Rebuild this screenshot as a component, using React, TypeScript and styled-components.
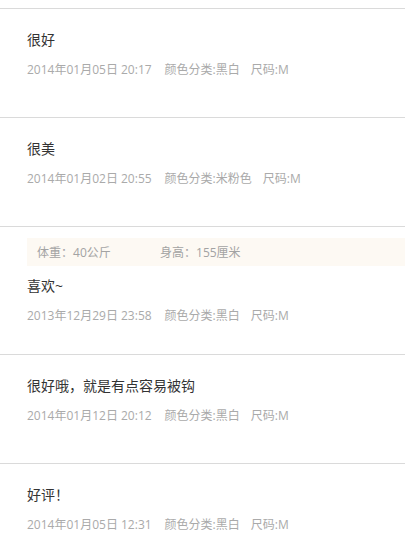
import React from 'react';
import styled, { createGlobalStyle } from 'styled-components';

const GlobalStyle = createGlobalStyle`
  html, body {
    margin: 0;
    padding: 0;
    background: #fff;
  }
  body {
    font-family: 'Open Sans', 'Noto Sans CJK SC', sans-serif;
  }
`;

const List = styled.ul`
  list-style: none;
  margin: 0;
  padding: 8px 0 0;
`;

const Item = styled.li<{ $hasBody?: boolean }>`
  border-top: 1px solid #dadada;
  padding: ${p => (p.$hasBody ? '11px 0 29px 27px' : '21px 0 38px 27px')};
`;

const BodyInfo = styled.div`
  display: flex;
  align-items: center;
  height: 28px;
  margin-bottom: 10px;
  padding-left: 10px;
  background: #fdf9f3;
  font-size: 12px;
  color: #a3a3a3;
`;

const BodyField = styled.span`
  width: 123px;
  white-space: nowrap;
`;

const Content = styled.p`
  margin: 0 0 11px;
  font-size: 14px;
  line-height: 20px;
  color: #333;
`;

const Meta = styled.div`
  display: flex;
  font-size: 12px;
  line-height: 18px;
  color: #aaa;
  white-space: nowrap;
`;

const MetaPart = styled.span<{ $gap: number }>`
  margin-right: ${p => p.$gap}px;
`;

interface Review {
  text: string;
  date: string;
  color: string;
  size: string;
  body?: { weight: string; height: string };
}

const reviews: Review[] = [
  { text: '很好', date: '2014年01月05日 20:17', color: '黑白', size: 'M' },
  { text: '很美', date: '2014年01月02日 20:55', color: '米粉色', size: 'M' },
  {
    text: '喜欢~',
    date: '2013年12月29日 23:58',
    color: '黑白',
    size: 'M',
    body: { weight: '40公斤', height: '155厘米' },
  },
  { text: '很好哦，就是有点容易被钩', date: '2014年01月12日 20:12', color: '黑白', size: 'M' },
  { text: '好评！', date: '2014年01月05日 12:31', color: '黑白', size: 'M' },
];

export default function App() {
  return (
    <>
      <GlobalStyle />
      <List>
        {reviews.map((r, i) => (
          <Item key={i} $hasBody={!!r.body}>
            {r.body && (
              <BodyInfo>
                <BodyField>体重：{r.body.weight}</BodyField>
                <BodyField>身高：{r.body.height}</BodyField>
              </BodyInfo>
            )}
            <Content>{r.text}</Content>
            <Meta>
              <MetaPart $gap={13}>{r.date}</MetaPart>
              <MetaPart $gap={11}>颜色分类:{r.color}</MetaPart>
              <MetaPart $gap={0}>尺码:{r.size}</MetaPart>
            </Meta>
          </Item>
        ))}
      </List>
    </>
  );
}
